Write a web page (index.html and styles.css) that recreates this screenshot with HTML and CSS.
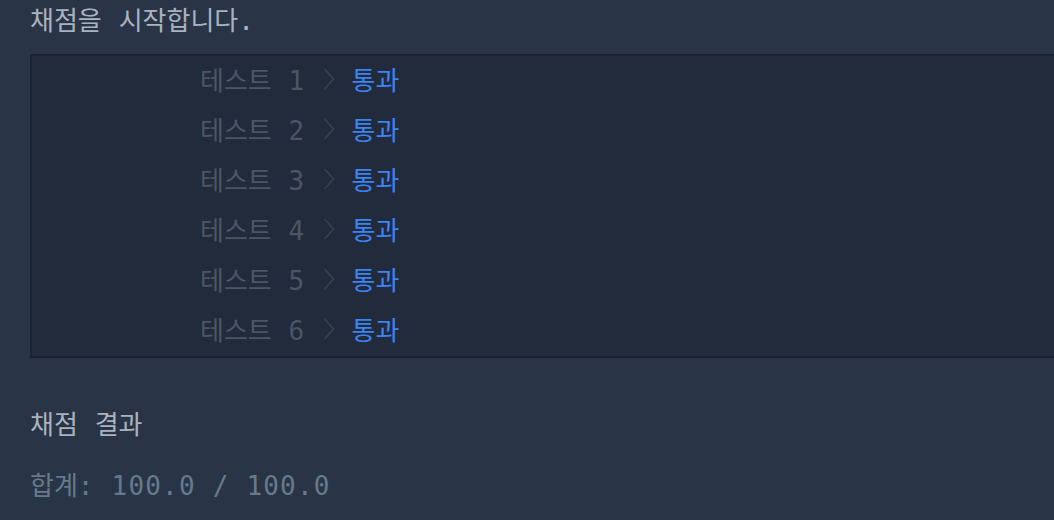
FILE: index.html
```html
<!DOCTYPE html>
<html lang="ko">
<head>
<meta charset="utf-8">
<link rel="stylesheet" href="styles.css">
</head>
<body>
<div class="console">
  <div class="heading"><span class="ko">채점을</span> <span class="ko">시작합니다</span>.</div>
  <div class="results">
    <div class="row"><span class="label"><span class="ko">테스트</span> 1</span><svg class="chev" viewBox="0 0 12 22"><polyline points="1.5,1 10.5,11 1.5,21"/></svg><span class="pass ko">통과</span></div>
    <div class="row"><span class="label"><span class="ko">테스트</span> 2</span><svg class="chev" viewBox="0 0 12 22"><polyline points="1.5,1 10.5,11 1.5,21"/></svg><span class="pass ko">통과</span></div>
    <div class="row"><span class="label"><span class="ko">테스트</span> 3</span><svg class="chev" viewBox="0 0 12 22"><polyline points="1.5,1 10.5,11 1.5,21"/></svg><span class="pass ko">통과</span></div>
    <div class="row"><span class="label"><span class="ko">테스트</span> 4</span><svg class="chev" viewBox="0 0 12 22"><polyline points="1.5,1 10.5,11 1.5,21"/></svg><span class="pass ko">통과</span></div>
    <div class="row"><span class="label"><span class="ko">테스트</span> 5</span><svg class="chev" viewBox="0 0 12 22"><polyline points="1.5,1 10.5,11 1.5,21"/></svg><span class="pass ko">통과</span></div>
    <div class="row"><span class="label"><span class="ko">테스트</span> 6</span><svg class="chev" viewBox="0 0 12 22"><polyline points="1.5,1 10.5,11 1.5,21"/></svg><span class="pass ko">통과</span></div>
  </div>
  <div class="section-title"><span class="ko">채점</span> <span class="ko">결과</span></div>
  <div class="total"><span class="ko">합계</span>: 100.0 / 100.0</div>
</div>
</body>
</html>
```

FILE: styles.css
```css
html, body {
  margin: 0;
  padding: 0;
  background: #293546;
}
body {
  width: 1054px;
  height: 520px;
  overflow: hidden;
}
.console {
  padding-left: 30px;
  font-family: "DejaVu Sans Mono", "Noto Sans CJK KR", monospace;
  font-size: 26px;
  letter-spacing: 1.2px;
}
.ko {
  font-family: "Noto Sans CJK KR", "Noto Sans", sans-serif;
  font-size: 26px;
  font-weight: 400;
  letter-spacing: 0;
}
.heading {
  height: 38px;
  line-height: 38px;
  color: #a9b3c0;
  white-space: pre;
}
.results {
  margin-top: 16px;
  background: #222b3b;
  border-top: 2px solid #1b2231;
  border-bottom: 2px solid #1b2231;
  border-left: 2px solid #1b2231;
  padding-left: 168px;
}
.row {
  box-sizing: border-box;
  height: 50px;
  padding-bottom: 5px;
  display: flex;
  align-items: center;
}
.label {
  color: #4a5668;
  white-space: pre;
}
.chev {
  width: 12px;
  height: 22px;
  margin-left: 18px;
  margin-right: 16px;
  fill: none;
  stroke: #364152;
  stroke-width: 1.5;
}
.pass {
  color: #3d83f2;
}
.section-title {
  margin-top: 47px;
  height: 36px;
  line-height: 36px;
  color: #a9b3c0;
  white-space: pre;
}
.total {
  margin-top: 25px;
  height: 36px;
  line-height: 36px;
  color: #677a8c;
  white-space: pre;
}
```
